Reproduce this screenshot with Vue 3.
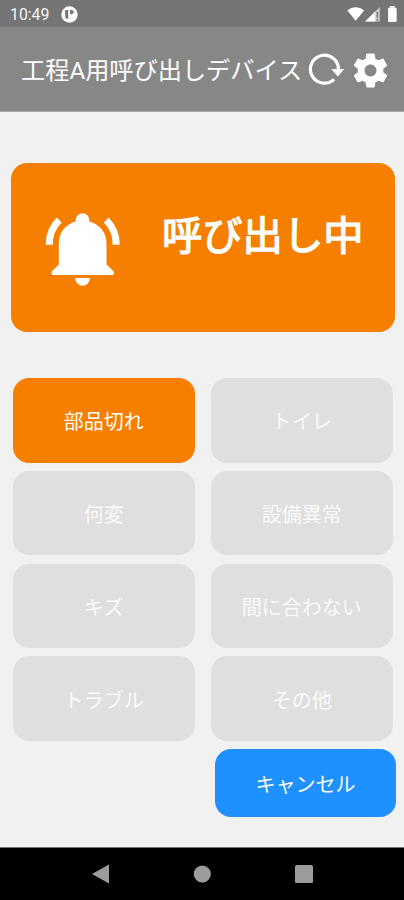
<script setup>
import { ref } from 'vue'

const reasons = ['部品切れ', 'トイレ', '何変', '設備異常', 'キズ', '間に合わない', 'トラブル', 'その他']
const selected = ref('部品切れ')

const cancel = () => {
    selected.value = null
}
</script>

<template>
    <div class="screen">
        <div class="status-bar">
            <span class="clock">10:49</span>
            <svg class="app-mark" width="17" height="17" viewBox="0 0 17 17">
                <circle cx="8.5" cy="8.5" r="8.2" fill="#fff" />
                <path d="M4.200 4H7.200V12.800H5.600L4.200 11.600Z" fill="#777" />
                <path d="M9 4H10.600A2.100 2.100 0 0 1 10.600 8.200H9Z" fill="#777" />
            </svg>
            <svg class="system-icons" width="52" height="17" viewBox="0 0 52 17">
                <path d="M0.400 4.500C5 0 12.500 0 17 4.500L8.700 14.800Z" fill="#fff" />
                <path d="M18.200 15.500L32.800 1V15.500Z" fill="#c8c8c8" />
                <path d="M18.200 15.500L28.300 5.500V15.500Z" fill="#fff" />
                <path d="M30.300 6V11.500M30.300 13V14.500" stroke="#777" stroke-width="1.400" />
                <path d="M41.500 2.200H43.200V0.500H47.400V2.200H49.200V15.500H41.500Z" fill="#fff" stroke="#fff"
                    stroke-width="0.800" stroke-linejoin="round" />
            </svg>
        </div>

        <header class="header">
            <h1 class="title">工程A用呼び出しデバイス</h1>
            <button type="button" class="icon-button" aria-label="更新">
                <svg width="38" height="34" viewBox="0 0 38 34" fill="none">
                    <path d="M27.100 26.300A14 14 0 1 1 31.400 17" stroke="#fff" stroke-width="3.200" />
                    <path d="M24.300 16H37.200L30.800 23.500Z" fill="#fff" />
                </svg>
            </button>
            <button type="button" class="icon-button settings" aria-label="設定">
                <svg width="41" height="41" viewBox="0 0 24 24">
                    <path fill="#fff"
                        d="M19.430 12.980c.04-.32.07-.64.07-.98s-.03-.66-.07-.98l2.110-1.650c.19-.15.24-.42.12-.64l-2-3.460c-.12-.22-.39-.3-.61-.22l-2.490 1c-.52-.4-1.080-.73-1.690-.98l-.38-2.650C14.460 2.180 14.250 2 14 2h-4c-.25 0-.46.18-.49.42l-.38 2.650c-.61.25-1.170.59-1.690.98l-2.490-1c-.23-.09-.49 0-.61.22l-2 3.460c-.13.22-.07.49.12.64l2.110 1.650c-.04.32-.07.65-.07.98s.03.66.07.98l-2.110 1.650c-.19.15-.24.42-.12.64l2 3.460c.12.22.39.3.61.22l2.490-1c.52.4 1.080.73 1.690.98l.38 2.650c.03.24.24.42.49.42h4c.25 0 .46-.18.49-.42l.38-2.650c.61-.25 1.170-.59 1.690-.98l2.490 1c.23.09.49 0 .61-.22l2-3.460c.12-.22.07-.49-.12-.64l-2.110-1.650zM12 15.500c-1.930 0-3.500-1.570-3.500-3.500s1.570-3.500 3.500-3.500 3.500 1.570 3.500 3.500-1.570 3.500-3.500 3.500z" />
                </svg>
            </button>
        </header>

        <main class="content">
            <section class="call-card">
                <svg class="bell" width="76" height="75" viewBox="0 0 76 75">
                    <path fill="#fff"
                        d="M30.600 8.200A6.900 6.900 0 0 1 44.400 8.200V9.500C55 12.500 61.500 20.500 61.500 31.500V52.500L68.300 59Q69.300 60.300 69 61.700Q68.500 62.900 67 62.900H8.500Q7 62.900 6.500 61.700Q6.200 60.300 7.200 59L13.800 52.500V31.500C13.800 20.500 20.300 12.500 30.600 9.500Z" />
                    <path fill="#fff" d="M30.200 66H45A7.400 7.700 0 0 1 30.200 66Z" />
                    <path d="M14.200 8Q4.200 18 4.200 32.700M61.200 8Q71.200 18 71.200 32.700" fill="none" stroke="#fff"
                        stroke-width="7" />
                </svg>
                <p class="call-text">呼び出し中</p>
            </section>

            <div class="reasons">
                <button v-for="reason in reasons" :key="reason" type="button" class="button"
                    :class="{ active: reason === selected }" @click="selected = reason">
                    {{ reason }}
                </button>
            </div>

            <button type="button" class="button cancel" @click="cancel">キャンセル</button>
        </main>

        <nav class="nav-bar">
            <svg width="18" height="20" viewBox="0 0 18 20">
                <path d="M0.900 10L18 0.500V19.500Z" fill="#9c9c9c" />
            </svg>
            <svg width="18" height="18" viewBox="0 0 18 18">
                <circle cx="9.300" cy="9" r="8.600" fill="#9c9c9c" />
            </svg>
            <svg width="18" height="18" viewBox="0 0 18 18">
                <rect width="18" height="18" rx="1.500" fill="#9c9c9c" />
            </svg>
        </nav>
    </div>
</template>

<style>
body {
    margin: 0;
}
</style>

<style scoped>
.screen {
    width: 404px;
    height: 900px;
    display: flex;
    flex-direction: column;
    overflow: hidden;
    background: #f1f1f1;
    color: #fff;
    font-family: Roboto, "Noto Sans CJK JP", sans-serif;
}

.status-bar {
    height: 27px;
    box-sizing: border-box;
    padding: 1px 5px 0 10px;
    display: flex;
    align-items: center;
    background: #757575;
}

.clock {
    width: 51px;
    padding-top: 2px;
    font-size: 15.800px;
    line-height: 20px;
    color: #f4f4f4;
}

.system-icons {
    margin-left: auto;
}

.header {
    height: 85px;
    box-sizing: border-box;
    padding: 2px 12px 0 21px;
    display: flex;
    align-items: center;
    background: #878787;
    border-bottom: 1px solid #a8a8a8;
}

.title {
    width: 285.500px;
    margin: 0;
    padding-top: 2px;
    font-size: 24.200px;
    font-weight: 400;
    line-height: 36px;
    white-space: nowrap;
}

.icon-button {
    padding: 0;
    border: none;
    background: none;
    line-height: 0;
    cursor: pointer;
}

.settings {
    margin-left: 5px;
}

.content {
    flex: 1;
    display: flex;
    flex-direction: column;
    padding: 51px 8px 0 11px;
}

.call-card {
    width: 383.500px;
    height: 168.500px;
    box-sizing: border-box;
    padding: 49px 0 0 34px;
    display: flex;
    align-items: flex-start;
    border-radius: 16px;
    background: #f77f00;
}

/* regular glyphs thickened evenly, the way Android fakes bold */
.call-text {
    margin: -5px 0 0 41px;
    font-size: 40.300px;
    font-weight: 400;
    line-height: 60px;
    white-space: nowrap;
    -webkit-text-stroke: 1.300px #fff;
}

.reasons {
    display: grid;
    grid-template-columns: 181.500px 181.500px;
    grid-auto-rows: 84.300px;
    gap: 8.400px 16.500px;
    margin: 46.800px 0 0 2px;
}

.button {
    padding: 1px 0 0;
    border: none;
    border-radius: 16px;
    background: #dfdfdf;
    color: #fafafa;
    font-family: inherit;
    font-size: 20px;
    cursor: pointer;
}

.button.active {
    background: #f77f00;
    color: #fff;
}

.button.cancel {
    align-self: flex-end;
    width: 181px;
    height: 67.500px;
    margin-top: 8.500px;
    padding-top: 2px;
    background: #1e90ff;
    color: #fff;
}

.nav-bar {
    height: 53px;
    box-sizing: border-box;
    padding: 0 91px;
    display: flex;
    justify-content: space-between;
    align-items: center;
    background: #000;
    border-top: 1px solid #777;
}
</style>
